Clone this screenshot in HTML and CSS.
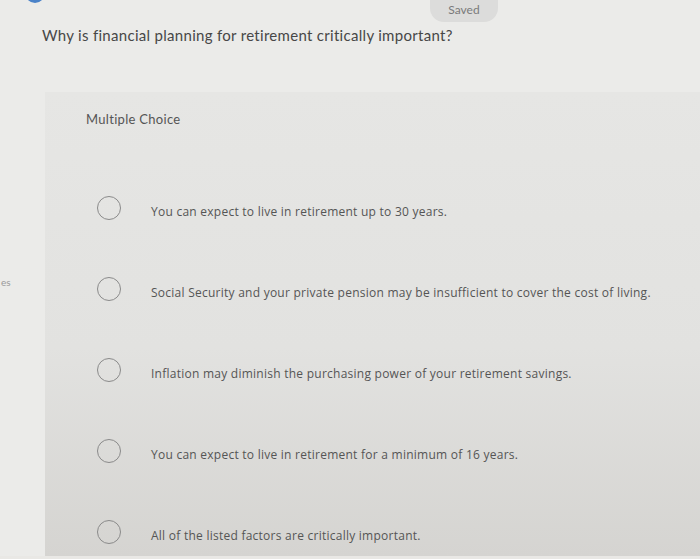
FILE: index.html
```html
<!DOCTYPE html>
<html>
<head>
<meta charset="utf-8">
<link rel="stylesheet" href="styles.css">
</head>
<body>
<div class="page">
  <div class="topbar">
    <span class="dot"></span>
    <span class="saved">Saved</span>
  </div>
  <div class="question">Why is financial planning for retirement critically important?</div>
  <div class="main">
    <div class="sidebar"><span class="frag">es</span></div>
    <div class="panel">
      <div class="type">Multiple Choice</div>
      <div class="options">
        <div class="option"><span class="radio"></span><span class="label">You can expect to live in retirement up to 30 years.</span></div>
        <div class="option"><span class="radio"></span><span class="label">Social Security and your private pension may be insufficient to cover the cost of living.</span></div>
        <div class="option"><span class="radio"></span><span class="label">Inflation may diminish the purchasing power of your retirement savings.</span></div>
        <div class="option"><span class="radio"></span><span class="label">You can expect to live in retirement for a minimum of 16 years.</span></div>
        <div class="option"><span class="radio"></span><span class="label">All of the listed factors are critically important.</span></div>
      </div>
    </div>
  </div>
  <div class="bottom"></div>
</div>
</body>
</html>
```

FILE: styles.css
```css
html, body {
  margin: 0;
  padding: 0;
}
body {
  width: 700px;
  height: 559px;
  overflow: hidden;
  background: #ebebe9;
  font-family: Lato, "Liberation Sans", sans-serif;
}
.page {
  display: flex;
  flex-direction: column;
  height: 559px;
}
.topbar {
  height: 22px;
  display: flex;
  align-items: flex-start;
  flex-shrink: 0;
}
.dot {
  width: 20px;
  height: 20px;
  border-radius: 50%;
  background: #4a82c8;
  margin-left: 25px;
  margin-top: -17px;
  flex-shrink: 0;
}
.saved {
  margin-left: 385px;
  margin-top: -6px;
  width: 68px;
  height: 28px;
  border-radius: 0 0 14px 14px;
  background: #dcdcdb;
  color: #7a7a7a;
  font-size: 12px;
  display: flex;
  align-items: flex-end;
  justify-content: center;
  padding-bottom: 5px;
  box-sizing: border-box;
}
.question {
  padding-left: 42px;
  margin-top: 3px;
  font-size: 15px;
  line-height: 20px;
  color: #474747;
  letter-spacing: 0.3px;
  flex-shrink: 0;
}
.main {
  display: flex;
  margin-top: 47px;
  flex: 1;
}
.sidebar {
  width: 45px;
  flex-shrink: 0;
  padding-top: 184px;
  box-sizing: border-box;
}
.frag {
  display: block;
  font-size: 10px;
  color: #9a9a9a;
  margin-left: 1px;
}
.panel {
  flex: 1;
  background: linear-gradient(180deg, #e6e6e4 0%, #e2e2e0 55%, #d5d4d1 100%);
  padding-top: 19px;
  padding-left: 41px;
}
.type {
  font-size: 13px;
  line-height: 16px;
  color: #555;
  letter-spacing: 0.3px;
}
.options {
  display: flex;
  flex-direction: column;
  gap: 57px;
  margin-top: 69px;
}
.option {
  display: flex;
  align-items: center;
  height: 24px;
}
.radio {
  width: 22px;
  height: 22px;
  border: 1.5px solid #8a8a8a;
  border-radius: 50%;
  margin-left: 11px;
  flex-shrink: 0;
}
.label {
  margin-left: 30px;
  margin-top: 6px;
  font-family: "Open Sans", Lato, sans-serif;
  font-size: 12px;
  letter-spacing: 0.25px;
  color: #555;
}
.bottom {
  height: 3px;
  background: #e9e8e5;
  flex-shrink: 0;
}
```
